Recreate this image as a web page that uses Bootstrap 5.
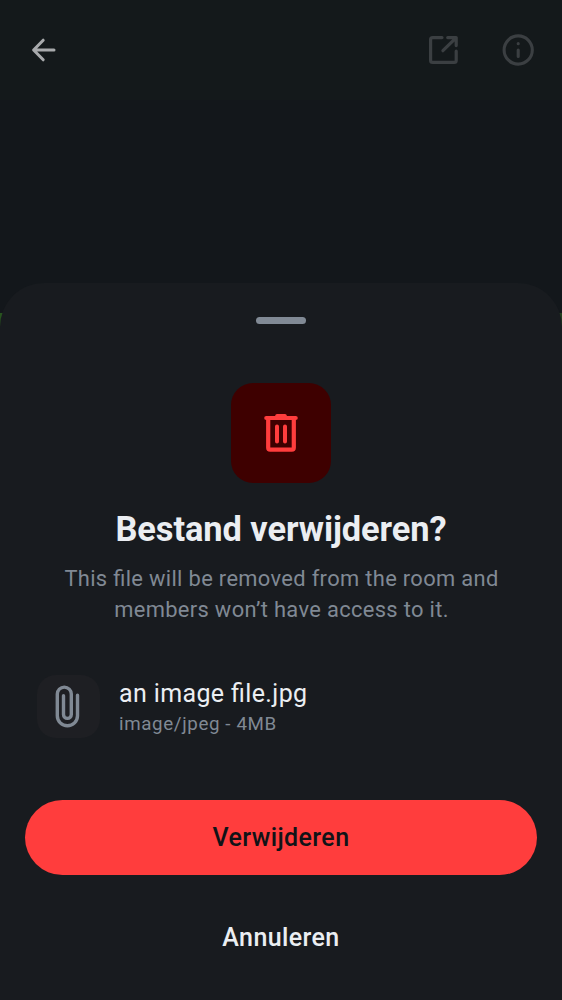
<!DOCTYPE html>
<html lang="nl" data-bs-theme="dark">
<head>
<meta charset="utf-8">
<meta name="viewport" content="width=device-width, initial-scale=1">
<title>Bestand verwijderen</title>
<link href="https://cdn.jsdelivr.net/npm/bootstrap@5.3.0/dist/css/bootstrap.min.css" rel="stylesheet">
<style>
body { height: 1000px; background: #13171b; font-family: Roboto, sans-serif; color: #ebeef2; overflow: hidden; font-feature-settings: "liga" 1; }
svg { display: block; fill: none; stroke: currentColor; stroke-linecap: round; stroke-linejoin: round; }
.topbar { height: 100px; padding: 0 24px 0 25px; background: #14191b; }
.back { color: #a8aaac; }
.actions { gap: 37px; color: #3b3f42; }
.viewer { height: 183px; }
.sheet-wrap { height: 717px; background: linear-gradient(90deg, #28541f 0, #28541f 50%, #23401f 50%) 0 30px / 100% 14px no-repeat; }
.sheet { background: #181b1f; border-radius: 44px 44px 0 0; padding: 34px 25px 0; }
.handle { width: 50px; height: 6.5px; background: #818a95; }
.danger-tile { width: 100px; height: 100px; margin-top: 59.5px; border-radius: 22px; background: #3e0000; color: #ff3d3d; }
h1 { font-size: 34.4px; line-height: 44px; font-weight: 700; letter-spacing: -.07px; margin: 24px 0 0; color: #ebeef2; }
.desc { font-size: 21.9px; line-height: 31px; letter-spacing: .33px; color: #808994; margin: 12px 0 0; padding-left: 1px; }
.file { margin: 50px 0 0 12px; gap: 19px; }
.clip { width: 63px; height: 63px; border-radius: 19px; background: #1e1f23; color: #808994; }
.fname { font-size: 25px; line-height: 32px; letter-spacing: .37px; margin-top: 2px; }
.fmeta { font-size: 18.75px; line-height: 28px; letter-spacing: .62px; color: #808994; }
.action { height: 75px; border: 0; font-size: 25px; font-weight: 500; letter-spacing: .39px; color: #ebeef2; }
.remove, .remove:hover { margin-top: 62px; background: #ff3d3d; color: #101317; }
.cancel { margin-top: 25px; }
</style>
</head>
<body>
<header class="topbar d-flex align-items-center justify-content-between">
  <svg class="back" width="38" height="38" viewBox="25 31 38 38" stroke-width="3"><path d="M43.2 40.2L33.6 50l9.6 9.8M34 50h20"/></svg>
  <div class="actions d-flex">
    <svg width="38" height="38" viewBox="425 31 38 38" stroke-width="3.2"><path d="M442 37.6h-9.4q-2 0-2 2v20.800q0 2 2 2h21.600q2 0 2-2v-9.200M447.700 37.600h8.500v8M442.900 50.700L456 37.800"/></svg>
    <svg width="38" height="38" viewBox="500 31 38 38" stroke-width="3.1"><circle cx="518.2" cy="50" r="14.1"/><path d="M518.200 50v6.400M518.200 43.500v.2"/></svg>
  </div>
</header>
<div class="viewer"></div>
<div class="sheet-wrap">
  <main class="sheet h-100 d-flex flex-column">
    <div class="handle rounded-pill mx-auto"></div>
    <div class="danger-tile mx-auto d-flex align-items-center justify-content-center">
      <svg width="38" height="42" viewBox="262 412 38 42"><path stroke-width="4.200" d="M266.300 418h29.400M268.200 418.500v29.200q0 2 2 2h21.600q2 0 2-2v-29.200"/><path stroke-width="3.400" d="M277 415.600h8"/><path stroke-width="4" d="M277 426.400v15M285 426.400v15"/></svg>
    </div>
    <h1 class="text-center">Bestand verwijderen?</h1>
    <p class="desc text-center">This file will be removed from the room and<br>members won’t have access to it.</p>
    <div class="file d-flex align-items-center">
      <div class="clip d-flex align-items-center justify-content-center">
        <svg width="30" height="45" viewBox="54 683.700 30 45" stroke-width="3.400"><path d="M77.500 695v20.400a10.100 10.100 0 0 1-20.200 0v-21.600a7 7 0 0 1 14 0v20.400a3.900 3.900 0 0 1-7.800 0V695.500"/></svg>
      </div>
      <div>
        <div class="fname">an image file.jpg</div>
        <div class="fmeta">image/jpeg - 4MB</div>
      </div>
    </div>
    <button class="btn rounded-pill action remove">Verwijderen</button>
    <button class="btn rounded-pill action cancel">Annuleren</button>
  </main>
</div>
<script src="https://cdn.jsdelivr.net/npm/bootstrap@5.3.0/dist/js/bootstrap.bundle.min.js"></script>
</body>
</html>
